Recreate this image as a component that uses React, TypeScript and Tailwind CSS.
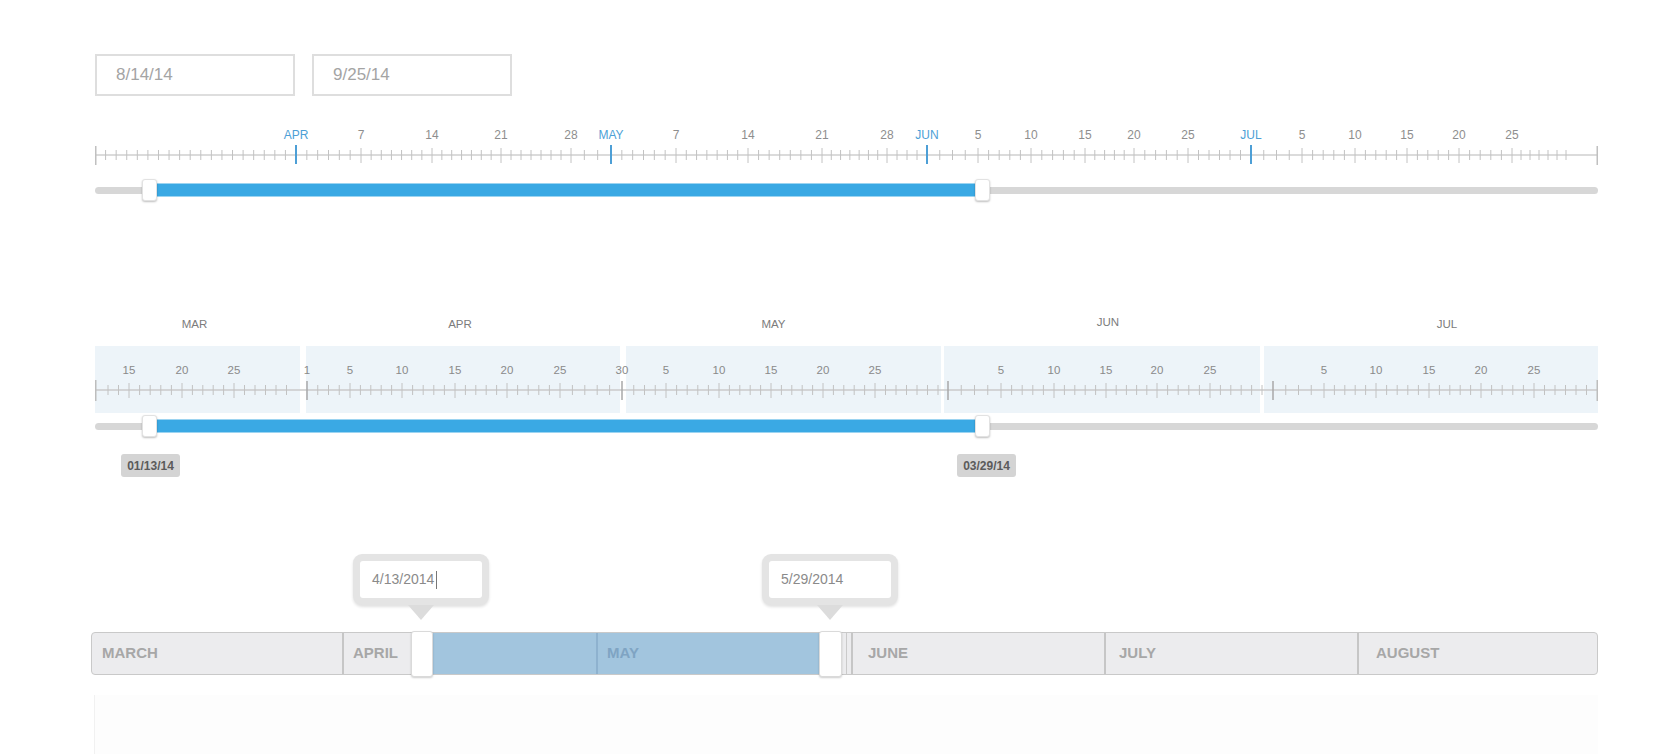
import React from "react";

type Anchor = [number, number];

// left edge of every ruler / slider on the page
const OX = 95;

const interp = (v: number, anchors: Anchor[]) => {
  for (let i = 0; i < anchors.length - 1; i++) {
    const [a, xa] = anchors[i];
    const [b, xb] = anchors[i + 1];
    if (v >= a && v <= b) return xa + ((v - a) / (b - a)) * (xb - xa);
  }
  return anchors[anchors.length - 1][1];
};

// day index: Mar 1 = 0, Apr 1 = 31, May 1 = 61, Jun 1 = 92, Jul 1 = 122
const TOP_ANCHORS: Anchor[] = [
  [12, 95], [31, 296], [37, 361], [44, 432], [51, 501], [58, 571],
  [61, 611], [67, 676], [74, 748], [81, 822], [88, 887],
  [92, 927], [96, 978], [101, 1031], [106, 1085], [111, 1134], [116, 1188],
  [122, 1251], [126, 1302], [131, 1355], [136, 1407], [141, 1459], [146, 1512], [152, 1566],
];

const TOP_MONTHS: { start: number; name: string; days: number[] }[] = [
  { start: 31, name: "APR", days: [7, 14, 21, 28] },
  { start: 61, name: "MAY", days: [7, 14, 21, 28] },
  { start: 92, name: "JUN", days: [5, 10, 15, 20, 25] },
  { start: 122, name: "JUL", days: [5, 10, 15, 20, 25] },
];

function TopRuler() {
  const labeled = new Map<number, string>();
  TOP_MONTHS.forEach(m => m.days.forEach(d => labeled.set(m.start + d - 1, String(d))));
  const starts = new Set(TOP_MONTHS.map(m => m.start));

  const ticks: React.ReactNode[] = [];
  for (let t = 13; t <= 152; t++) {
    const x = interp(t, TOP_ANCHORS) - OX;
    if (starts.has(t)) continue;
    const big = labeled.has(t);
    ticks.push(<line key={t} x1={x} x2={x} y1={big ? 28 : 30} y2={big ? 43 : 40} stroke="#c2c2c2" strokeWidth={1} />);
  }

  return (
    <svg width={1503} height={50} className="mt-[24px] block" fontFamily="Liberation Sans, Arial, sans-serif">
      <line x1={0} x2={1503} y1={35} y2={35} stroke="#cfcfcf" strokeWidth={1.5} />
      <line x1={0.75} x2={0.75} y1={26} y2={45} stroke="#c0c0c0" strokeWidth={1.5} />
      <line x1={1502.25} x2={1502.25} y1={26} y2={45} stroke="#c0c0c0" strokeWidth={1.5} />
      {ticks}
      {TOP_MONTHS.map(m => {
        const x = interp(m.start, TOP_ANCHORS) - OX;
        return (
          <g key={m.name}>
            <line x1={x} x2={x} y1={25} y2={44} stroke="#4d9fd6" strokeWidth={2} />
            <text x={x} y={19} textAnchor="middle" fontSize={12} fill="#4d9fd6">{m.name}</text>
          </g>
        );
      })}
      {[...labeled.entries()].map(([t, label]) => (
        <text key={t} x={interp(t, TOP_ANCHORS) - OX} y={19} textAnchor="middle" fontSize={12} fill="#8e8e8e">
          {label}
        </text>
      ))}
    </svg>
  );
}

type MonthTicks = { anchors: Anchor[]; from: number; to: number; labels: number[]; dark: number[] };

const LOWER: MonthTicks[] = [
  { anchors: [[12, 97.5], [15, 129], [20, 182], [25, 234], [31, 297]], from: 13, to: 30, labels: [15, 20, 25], dark: [] },
  { anchors: [[1, 307], [5, 350], [10, 402], [15, 455], [20, 507], [25, 560], [30, 622]], from: 1, to: 30, labels: [1, 5, 10, 15, 20, 25, 30], dark: [1, 30] },
  { anchors: [[1, 623], [5, 666], [10, 719], [15, 771], [20, 823], [25, 875], [31, 938]], from: 2, to: 31, labels: [5, 10, 15, 20, 25], dark: [] },
  { anchors: [[1, 948], [5, 1001], [10, 1054], [15, 1106], [20, 1157], [25, 1210], [30, 1262]], from: 1, to: 30, labels: [5, 10, 15, 20, 25], dark: [1] },
  { anchors: [[1, 1273], [5, 1324], [10, 1376], [15, 1429], [20, 1481], [25, 1534], [31, 1597]], from: 1, to: 30, labels: [5, 10, 15, 20, 25], dark: [1] },
];

function LowerRuler() {
  const ticks: React.ReactNode[] = [];
  const labels: React.ReactNode[] = [];
  LOWER.forEach((m, mi) => {
    for (let d = m.from; d <= m.to; d++) {
      const x = interp(d, m.anchors) - OX;
      const dark = m.dark.includes(d);
      const big = m.labels.includes(d);
      ticks.push(
        <line
          key={`${mi}-${d}`}
          x1={x}
          x2={x}
          y1={dark ? 35 : big ? 37 : 39}
          y2={dark ? 54 : big ? 52 : 49}
          stroke={dark ? "#a9a9a9" : "#c2c2c2"}
          strokeWidth={dark ? 1.5 : 1}
        />
      );
      if (big) {
        labels.push(
          <text key={`l${mi}-${d}`} x={x} y={28} textAnchor="middle" fontSize={11.5} fill="#8a8a8a">
            {d}
          </text>
        );
      }
    }
  });
  return (
    <svg width={1503} height={67} className="absolute left-0 top-0" fontFamily="Liberation Sans, Arial, sans-serif">
      <line x1={0} x2={1503} y1={44} y2={44} stroke="#cacaca" strokeWidth={1.5} />
      <line x1={0.75} x2={0.75} y1={34} y2={55} stroke="#bdbdbd" strokeWidth={1.5} />
      <line x1={1502.25} x2={1502.25} y1={34} y2={55} stroke="#bdbdbd" strokeWidth={1.5} />
      {ticks}
      {labels}
    </svg>
  );
}

function Handle({ className }: { className: string }) {
  return (
    <div
      className={`absolute top-[1px] h-[22px] w-[15px] rounded-[3px] border border-[#e2e2e2] bg-white shadow-[0_1px_2px_rgba(0,0,0,0.25)] ${className}`}
    />
  );
}

function RangeSlider({ className }: { className: string }) {
  return (
    <div className={`relative flex h-[24px] items-center ${className}`}>
      <div className="h-[7px] w-full rounded-full bg-[#d7d7d7]" />
      <div className="absolute left-[54px] top-1/2 h-[13px] w-[833px] -translate-y-1/2 bg-[#3aa9e4]" />
      <Handle className="left-[47px]" />
      <Handle className="left-[880px]" />
    </div>
  );
}

function DateBox({ value }: { value: string }) {
  return (
    <div className="flex h-[42px] w-[200px] items-center border-2 border-[#dedede] pl-[19px] text-[17px] text-[#a4a4a4]">
      {value}
    </div>
  );
}

function Callout({ value, caret }: { value: string; caret?: boolean }) {
  return (
    <div className="flex w-[136px] flex-col items-center">
      <div className="w-full rounded-[9px] bg-[#e4e4e4] p-[7px] shadow-[0_2px_3px_rgba(0,0,0,0.12)]">
        <div className="flex h-[37px] items-center rounded-[3px] bg-white pl-[12px] text-[14px] text-[#8a8a8a]">
          {value}
          {caret && <span className="ml-[2px] h-[18px] w-px bg-[#777]" />}
        </div>
      </div>
      <div className="h-0 w-0 border-l-[13px] border-r-[13px] border-t-[15px] border-l-transparent border-r-transparent border-t-[#dcdcdc]" />
    </div>
  );
}

export default function App() {
  return (
    <div className="h-screen overflow-hidden bg-white font-['Liberation_Sans',Arial,sans-serif]">
      <div className="ml-[95px] w-[1503px] pt-[54px]">
        <div className="flex gap-[17px]">
          <DateBox value="8/14/14" />
          <DateBox value="9/25/14" />
        </div>

        <TopRuler />
        <RangeSlider className="mt-[8px]" />

        {/* month headers */}
        <div className="mt-[115px] flex h-[14px] text-[11.5px] leading-[14px] text-[#7c7c7c]">
          <div className="mr-[6px] w-[205px] -translate-x-[3px] text-center">MAR</div>
          <div className="mr-[6px] w-[314px] -translate-x-[3px] text-center">APR</div>
          <div className="mr-[3px] w-[315px] -translate-x-[10px] text-center">MAY</div>
          <div className="mr-[4px] w-[316px] translate-x-[6px] -translate-y-[2px] text-center">JUN</div>
          <div className="w-[334px] translate-x-[16px] text-center">JUL</div>
        </div>

        <div className="relative mt-[15px] flex h-[67px]">
          <div className="mr-[6px] w-[205px] bg-[#edf4f9]" />
          <div className="mr-[6px] w-[314px] bg-[#edf4f9]" />
          <div className="mr-[3px] w-[315px] bg-[#edf4f9]" />
          <div className="mr-[4px] w-[316px] bg-[#edf4f9]" />
          <div className="w-[334px] bg-[#edf4f9]" />
          <LowerRuler />
        </div>

        <RangeSlider className="mt-[1px]" />

        <div className="mt-[16px] flex text-[12px] font-bold text-[#5b5b5b]">
          <div className="ml-[26px] flex h-[23px] w-[59px] items-center justify-center rounded-[3px] bg-[#d4d4d4]">01/13/14</div>
          <div className="ml-[777px] flex h-[23px] w-[59px] items-center justify-center rounded-[3px] bg-[#d4d4d4]">03/29/14</div>
        </div>

        {/* month band selector */}
        <div className="-ml-[4px] w-[1507px]">
          <div className="mt-[77px] flex">
            <div className="ml-[262px]">
              <Callout value="4/13/2014" caret />
            </div>
            <div className="ml-[273px]">
              <Callout value="5/29/2014" />
            </div>
          </div>

          <div className="relative mt-[12px] flex h-[43px] rounded-[4px] border border-[#c9c9c9] bg-[#ececee] text-[15px] font-bold text-[#a7a7a7]">
            <div className="absolute bottom-0 left-[341px] top-0 w-[386px] bg-[#a2c5de]" />
            <div className="absolute bottom-0 left-[754px] top-0 w-px bg-[#cacaca]" />
            <div className="relative flex w-[250px] items-center pl-[10px]">MARCH</div>
            <div className="relative flex w-[254px] items-center border-l-2 border-[#c6c6c6] pl-[9px]">APRIL</div>
            <div className="relative flex w-[255px] items-center border-l-2 border-[#8eb2cf] pl-[9px] text-[#7fa4c3]">MAY</div>
            <div className="relative flex w-[253px] items-center border-l-2 border-[#c6c6c6] pl-[15px]">JUNE</div>
            <div className="relative flex w-[253px] items-center border-l-2 border-[#c6c6c6] pl-[13px]">JULY</div>
            <div className="relative flex flex-1 items-center border-l-2 border-[#c6c6c6] pl-[17px]">AUGUST</div>
            <div className="absolute left-[319px] top-[-2px] h-[46px] w-[22px] rounded-[3px] border border-[#dadada] bg-white shadow-[0_1px_2px_rgba(0,0,0,0.2)]" />
            <div className="absolute left-[727px] top-[-2px] h-[46px] w-[23px] rounded-[3px] border border-[#dadada] bg-white shadow-[0_1px_2px_rgba(0,0,0,0.2)]" />
          </div>

          <div className="ml-[3px] mt-[20px] h-[59px] border-l border-[#f1f1f1] bg-[#fdfdfd]" />
        </div>
      </div>
    </div>
  );
}
